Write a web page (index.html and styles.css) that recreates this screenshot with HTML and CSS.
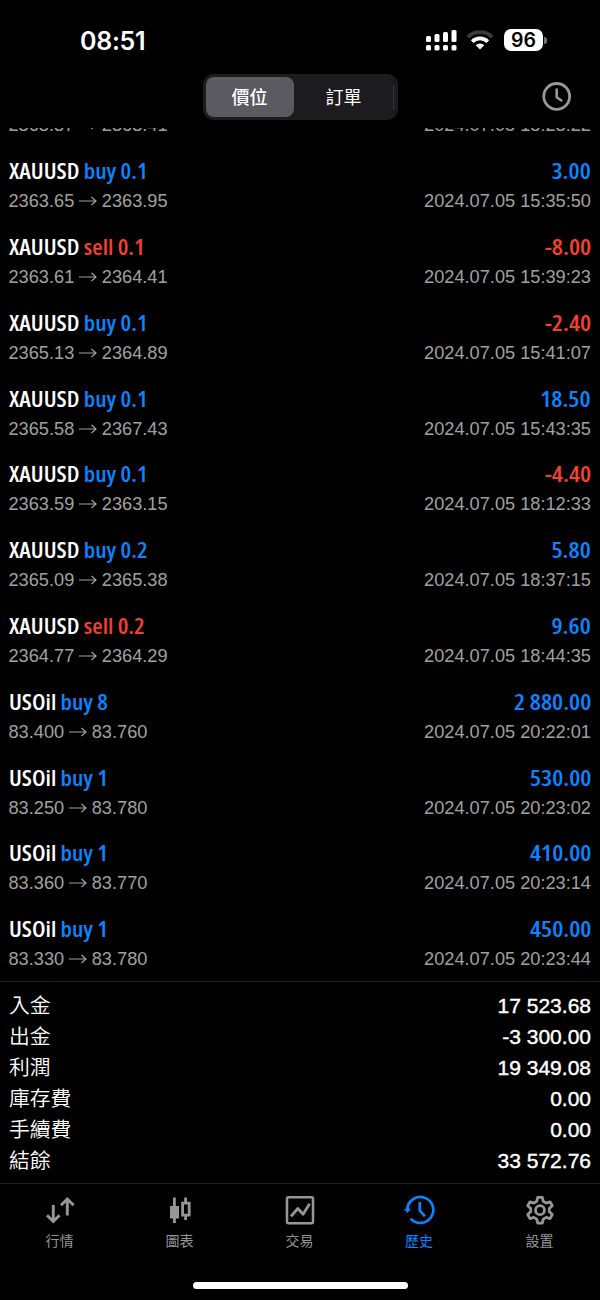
FILE: index.html
```html
<!DOCTYPE html>
<html lang="zh-Hant">
<head>
<meta charset="utf-8">
<title>歷史</title>
<link rel="stylesheet" href="styles.css">
</head>
<body>
<div class="app">
  <header class="status">
    <span class="time">08:51</span>
    <span class="indicators">
      <svg width="32" height="22" viewBox="0 0 32 22" fill="#fff"><rect x="0" y="7" width="5" height="6" rx="1.5"/><rect x="8.5" y="5" width="5" height="8" rx="1.5"/><rect x="17" y="3" width="5" height="10" rx="1.5"/><rect x="25.5" y="1" width="5" height="12" rx="1.5"/><rect x="0" y="16" width="5" height="5.5" rx="1.5"/><rect x="8.5" y="16" width="5" height="5.5" rx="1.5"/><rect x="17" y="16" width="5" height="5.5" rx="1.5"/><rect x="25.5" y="16" width="5" height="5.5" rx="1.5"/></svg>
      <svg class="wifi" width="28" height="22" viewBox="0 0 28 22" fill="none" stroke-width="3.8"><path d="M1.8 8.1a17.5 17.5 0 0 1 24.4 0" stroke="#3b3b3b"/><path d="M6.2 12.6a11.2 11.2 0 0 1 15.6 0" stroke="#fff"/><path d="M14 20.6l-4.3-4.4a6.2 6.2 0 0 1 8.6 0z" fill="#fff"/></svg>
      <span class="battery">96</span><span class="battery-tip"></span>
    </span>
  </header>
  <nav class="toolbar">
    <div class="segments"><span class="segment active">價位</span><span class="segment">訂單</span><i class="segment-line"></i></div>
    <svg class="clock" width="30" height="30" viewBox="0 0 30 30" fill="none" stroke="#98989a" stroke-width="2.8" stroke-linecap="round" stroke-linejoin="round"><circle cx="14.700" cy="15.400" r="12.900"/><path d="M14.700 8.500v7.800l4.700 3.200" stroke-width="2.600"/></svg>
  </nav>
  <main class="deals" id="deals"></main>
  <section class="summary">
    <div class="total"><span>入金</span><b>17 523.68</b></div>
    <div class="total"><span>出金</span><b>-3 300.00</b></div>
    <div class="total"><span>利潤</span><b>19 349.08</b></div>
    <div class="total"><span>庫存費</span><b>0.00</b></div>
    <div class="total"><span>手續費</span><b>0.00</b></div>
    <div class="total"><span>結餘</span><b>33 572.76</b></div>
  </section>
  <footer class="tabs">
    <div class="tab"><svg width="30" height="30" viewBox="0 0 30 30" fill="none" stroke="currentColor" stroke-width="2.900"><path d="M8.300 10v16.500M2 20.200l6.300 6.300 6.300-6.300M22.300 20.500V4M16 10.300L22.300 4l6.300 6.300"/></svg><span>行情</span></div>
    <div class="tab"><svg width="30" height="30" viewBox="0 0 30 30" fill="currentColor"><path d="M8 2.500h2.800v8.500h3.200v12.500h-3.200v4.500H8v-4.500H5V11h3z"/><path fill-rule="evenodd" d="M19.200 2.500H22v4.200h3.600v14.800H22V25h-2.800v-3.500h-3V6.700h3zM19 9.500v9.200h3.800V9.500z"/></svg><span>圖表</span></div>
    <div class="tab"><svg width="30" height="30" viewBox="0 0 30 30" fill="none" stroke="currentColor" stroke-width="2.500" stroke-linejoin="round"><rect x="2" y="2.200" width="26" height="26" rx="1.500"/><path d="M6 21.300l6.800-7.800 5.300 5.700L24.600 8.700" stroke-width="2.800"/></svg><span>交易</span></div>
    <div class="tab current"><svg width="32" height="30" viewBox="0 0 32 30" fill="none" stroke="currentColor" stroke-width="2.700"><path d="M4.300 15A13 13 0 1 1 7.600 23.600"/><path d="M16.800 7v8.600l5.200 5.800"/><path d="M.8 13.700h7.200L4.400 18z" fill="currentColor" stroke="none"/></svg><span>歷史</span></div>
    <div class="tab"><svg width="30" height="30" viewBox="0 0 30 30" fill="none" stroke="currentColor" stroke-width="2.800" stroke-linejoin="round"><path d="M12.700 2.300h4.600l.9 4 2.900 1.700 3.900-1.200 2.300 4-3 2.800v3.200l3 2.800-2.300 4-3.900-1.200-2.900 1.700-.9 4h-4.600l-.9-4-2.900-1.700-3.900 1.200-2.300-4 3-2.800v-3.200l-3-2.800 2.300-4 3.900 1.200 2.900-1.700z"/><circle cx="15" cy="15.200" r="4.500"/></svg><span>設置</span></div>
  </footer>
  <div class="home"></div>
</div>
<script src="deals.js"></script>
</body>
</html>
```
FILE: styles.css
```css
* { box-sizing: border-box; }
body { margin: 0; background: #000; }
.app { width: 600px; height: 1300px; display: flex; flex-direction: column; overflow: hidden; color: #fff; font-family: "Liberation Sans", "Noto Sans CJK TC", sans-serif; }
.status { height: 74px; flex: none; display: flex; justify-content: space-between; align-items: flex-start; padding: 26px 53px 0 80px; }
.time { font: 600 25px/30px Inter, sans-serif; letter-spacing: -.3px; }
.indicators { display: flex; align-items: center; padding-top: 3px; }
.wifi { margin: 0 10px 0 8px; }
.battery { width: 39px; height: 22px; border-radius: 7px; background: #fff; color: #000; font: 600 19.500px/23px Inter, sans-serif; text-align: center; }
.battery-tip { width: 3px; height: 7px; margin-left: 1px; border-radius: 0 3px 3px 0; background: #777; }
.toolbar { height: 54px; flex: none; display: flex; justify-content: space-between; align-items: flex-start; padding: 0 28px 0 203px; }
.segments { width: 195px; height: 46px; display: flex; align-items: center; padding: 3px; border-radius: 11px; background: #1c1b20; font: 18px/38px "Noto Sans CJK TC", sans-serif; }
.segment { width: 99px; height: 40px; text-align: center; }
.segment.active { width: 88px; border-radius: 8px; background: #5b5a60; font-weight: 500; padding-right: 1px; }
.segment-line { width: 1px; height: 25px; background: #38373c; }
.clock { margin-top: 7px; }
.deals { height: 853px; flex: none; overflow: hidden; display: flex; flex-direction: column; justify-content: flex-end; padding: 0 9px 0 8.500px; }
.deal { height: 67.800px; margin-top: 8px; flex: none; }
.line { display: flex; justify-content: space-between; align-items: center; white-space: pre; }
.headline { height: 30px; font: 600 22px/30px "Open Sans", sans-serif; font-stretch: 75%; }
.order { transform: scaleX(1.083); transform-origin: left; }
.profit { transform: scaleX(1.13); transform-origin: right; }
.detail { height: 32px; color: #a1a1a1; font-size: 18.200px; line-height: 32px; }
.prices { display: flex; align-items: center; gap: 4.800px; }
.buy, .gain { color: #0a84ff; }
.sell, .loss { color: #f5402c; }
.summary { height: 202px; flex: none; border-top: 1px solid #222; padding: 7px 9px 0; }
.total { height: 31px; display: flex; justify-content: space-between; align-items: center; font-size: 21px; line-height: 31px; }
.total span { font: 350 20.800px/31px "Noto Sans CJK TC", sans-serif; }
.total b { font-weight: 400; padding-top: 2px; -webkit-text-stroke: .4px #fff; }
.tabs { height: 99px; flex: none; border-top: 1px solid #202020; display: flex; color: #969696; }
.tab { width: 120px; display: flex; flex-direction: column; align-items: center; padding: 11px 1px 0 0; }
.tab span { margin-top: 5px; font: 14px/20px "Noto Sans CJK TC", sans-serif; }
.tab.current { color: #0a84ff; padding-right: 2px; }
.home { width: 215px; height: 7px; flex: none; align-self: center; border-radius: 4px; background: #fff; }
```
FILE: deals.js
```js
const deals = [
  ['XAUUSD', 'sell 0.1', '3.00', '2363.37', '2363.41', '2024.07.05 15:23:22'],
  ['XAUUSD', 'buy 0.1', '3.00', '2363.65', '2363.95', '2024.07.05 15:35:50'],
  ['XAUUSD', 'sell 0.1', '-8.00', '2363.61', '2364.41', '2024.07.05 15:39:23'],
  ['XAUUSD', 'buy 0.1', '-2.40', '2365.13', '2364.89', '2024.07.05 15:41:07'],
  ['XAUUSD', 'buy 0.1', '18.50', '2365.58', '2367.43', '2024.07.05 15:43:35'],
  ['XAUUSD', 'buy 0.1', '-4.40', '2363.59', '2363.15', '2024.07.05 18:12:33'],
  ['XAUUSD', 'buy 0.2', '5.80', '2365.09', '2365.38', '2024.07.05 18:37:15'],
  ['XAUUSD', 'sell 0.2', '9.60', '2364.77', '2364.29', '2024.07.05 18:44:35'],
  ['USOil', 'buy 8', '2 880.00', '83.400', '83.760', '2024.07.05 20:22:01'],
  ['USOil', 'buy 1', '530.00', '83.250', '83.780', '2024.07.05 20:23:02'],
  ['USOil', 'buy 1', '410.00', '83.360', '83.770', '2024.07.05 20:23:14'],
  ['USOil', 'buy 1', '450.00', '83.330', '83.780', '2024.07.05 20:23:44']
];
const arrow = '<svg width="18" height="12" viewBox="0 0 18 12" fill="none" stroke="currentColor" stroke-width="1.2"><path d="M0 6h17M12.500 2L17 6l-4.500 4"/></svg>';
document.getElementById('deals').innerHTML = deals.map(([symbol, order, profit, open, close, date]) => `
<article class="deal"><div class="line headline"><span class="order">${symbol} <span class="${order.split(' ')[0]}">${order}</span></span><span class="profit ${profit[0] === '-' ? 'loss' : 'gain'}">${profit}</span></div><div class="line detail"><span class="prices">${open}${arrow}${close}</span><span>${date}</span></div></article>`).join('');
```
